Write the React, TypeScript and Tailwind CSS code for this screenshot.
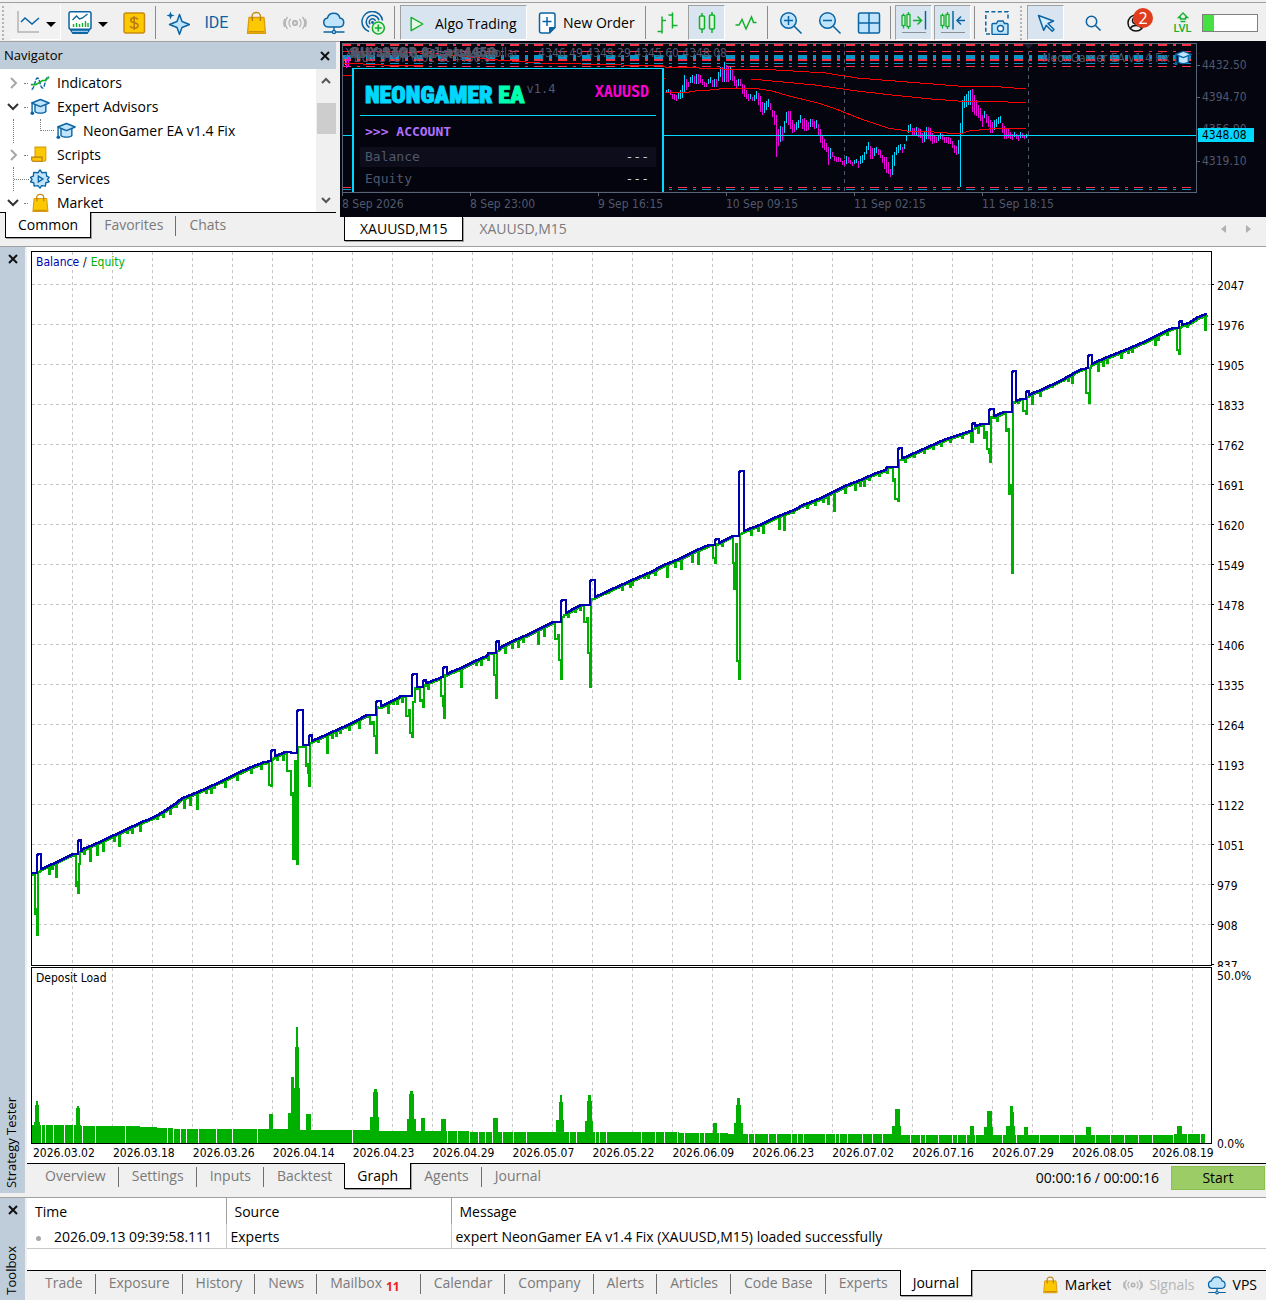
import React from "react";

const UI = "font-['Open_Sans','Noto_Sans',sans-serif]";
const CHART = "font-['DejaVu_Sans_Condensed','Noto_Sans',sans-serif]";
const MONO = "font-['DejaVu_Sans_Mono','Liberation_Mono',monospace]";

/* ---------- icons ---------- */

type IconProps = { children: React.ReactNode; className?: string };

function Icon({ children, className = "h-6 w-6" }: IconProps) {
  return (
    <svg viewBox="0 0 24 24" fill="none" className={`${className} shrink-0`} aria-hidden="true">
      {children}
    </svg>
  );
}

const BLUE = "#0a64a4";
const SKY = "#bfe4fb";
const GREEN = "#12b02c";

const LineChartIcon = () => (
  <Icon>
    <path d="M2 1v21h21" stroke="#b4b4b4" strokeWidth="1.5" />
    <path d="M5 12l4-4 7 6 7-6" stroke={BLUE} strokeWidth="1.5" />
  </Icon>
);
const MonitorIcon = () => (
  <Icon>
    <rect x="1" y="0.8" width="22" height="17.5" rx="2" fill="#fff" stroke={BLUE} strokeWidth="1.5" />
    <path d="M4.500 9l4-4 3 3 3-1 5-4" stroke={BLUE} strokeWidth="1.4" />
    <path d="M5.500 16v-3M8.500 16v-4M11.500 16v-3M14.500 16v-4M17.500 16v-6M20 16v-4" stroke={GREEN} strokeWidth="1.4" />
    <path d="M1.500 18.500h21l-3 4.500h-15z" fill={BLUE} />
    <path d="M4 20.300h16" stroke={SKY} strokeWidth="1" />
  </Icon>
);
const DollarIcon = () => (
  <Icon>
    <rect x="2" y="2" width="20.500" height="20" rx="2" fill="#fcc800" stroke="#c98c12" strokeWidth="1.500" />
    <path d="M15.800 8.500c-.8-1.300-2-1.700-3.600-1.700-2 0-3.500.9-3.500 2.500 0 3.600 7.300 1.500 7.300 5.100 0 1.700-1.700 2.700-3.800 2.700-1.900 0-3.400-.7-4.100-2M12.200 5v14" stroke="#b97a10" strokeWidth="1.500" />
  </Icon>
);
const SparkIcon = () => (
  <Icon>
    <path d="M13.500 3.500l2.500 7 7.500 3-7.500 3-2.500 6.700-2.500-6.700-7.500-3 7.500-3z" fill={SKY} stroke={BLUE} strokeWidth="1.500" strokeLinejoin="round" />
    <path d="M4.500.5l1.100 2.900 3 1.100-3 1.100-1.100 3-1.100-3-3-1.100 3-1.100z" fill={BLUE} />
  </Icon>
);
const BagIcon = ({ className }: { className?: string }) => (
  <Icon className={className}>
    <path d="M8 9V5.500a4 4 0 0 1 4-4h.5a4 4 0 0 1 4 4V9" stroke="#c98c12" strokeWidth="1.500" />
    <path d="M5 6.500h15l1.500 15.800H3.500z" fill="#fcc800" stroke="#d99c10" strokeWidth="1.300" strokeLinejoin="round" />
    <path d="M4.800 20.800h15.500" stroke="#b97a10" strokeWidth="1" />
    <path d="M8.300 6v4M16.400 6v4" stroke="#b97a10" strokeWidth="1.400" />
  </Icon>
);
const SignalIcon = ({ className }: { className?: string }) => (
  <Icon className={className}>
    <circle cx="12" cy="12" r="2.300" fill="#ddd" stroke="#adadad" strokeWidth="1.400" />
    <path d="M7.600 8a6 6 0 0 0 0 8M16.400 8a6 6 0 0 1 0 8M4.500 6a9 9 0 0 0 0 12M19.500 6a9 9 0 0 1 0 12M1.800 8a9 9 0 0 0 0 8M22.200 8a9 9 0 0 1 0 8" stroke="#b4b4b4" strokeWidth="1.400" />
  </Icon>
);
const CloudIcon = ({ className }: { className?: string }) => (
  <Icon className={className}>
    <path d="M6 16a4.500 4.500 0 0 1-.6-8.900A6.500 6.500 0 0 1 18 7.100a4.500 4.500 0 0 1-.3 8.900z" fill={SKY} stroke={BLUE} strokeWidth="1.500" />
    <path d="M12 16v4M1.500 21h8.500M14 21h8.500" stroke={BLUE} strokeWidth="1.400" />
    <circle cx="12" cy="21" r="1.600" stroke={BLUE} strokeWidth="1.300" fill={SKY} />
  </Icon>
);
const RadarIcon = () => (
  <Icon>
    <path d="M8 20.500A10.300 10.300 0 1 1 21.500 9.500M8.500 16.500A6.500 6.500 0 1 1 18 9.200M9.200 13.300A3.200 3.200 0 1 1 14.500 10" stroke={BLUE} strokeWidth="1.500" />
    <circle cx="11.500" cy="11.500" r="1.400" fill={BLUE} />
    <circle cx="17.300" cy="17" r="6" fill="#dff7df" stroke={GREEN} strokeWidth="1.500" />
    <path d="M17.300 13.500v7M13.800 17h7" stroke={GREEN} strokeWidth="1.600" />
  </Icon>
);
const PlayIcon = () => (
  <Icon className="h-5 w-5">
    <path d="M5 4l14 8-14 8z" fill="#e6f9e6" stroke={GREEN} strokeWidth="1.700" strokeLinejoin="round" />
  </Icon>
);
const NewOrderIcon = () => (
  <Icon>
    <path d="M6.500 2H18a2 2 0 0 1 2 2v12.500L14.500 22h-8a2 2 0 0 1-2-2V4a2 2 0 0 1 2-2z" fill="#fff" stroke={BLUE} strokeWidth="1.500" />
    <path d="M20 16.500L14.500 22v-5.500z" fill={BLUE} stroke={BLUE} />
    <path d="M12 6v9M7.500 10.500h9" stroke={BLUE} strokeWidth="1.500" />
  </Icon>
);
const BarsIcon = () => (
  <Icon>
    <path d="M6 5.500v17M1.500 20.500H6M6 9.500h4M16.500 1.500v16M12.500 4h4M16.500 14.500h5" stroke={GREEN} strokeWidth="1.500" />
  </Icon>
);
const CandlesIcon = () => (
  <Icon>
    <path d="M7 2v3M7 18v4M17 1v3M17 18v4" stroke={GREEN} strokeWidth="1.500" />
    <rect x="4.500" y="5" width="5" height="13" rx="1" fill="#dff5df" stroke={GREEN} strokeWidth="1.500" />
    <rect x="14.500" y="4" width="5" height="14" rx="1" fill="#dff5df" stroke={GREEN} strokeWidth="1.500" />
  </Icon>
);
const WaveIcon = () => (
  <Icon>
    <path d="M1.500 14H5l3-5.500L12 18l5.500-12 2 5.500h3" stroke={GREEN} strokeWidth="1.500" />
  </Icon>
);
const ZoomIcon = ({ plus }: { plus: boolean }) => (
  <Icon>
    <circle cx="9.500" cy="9.500" r="7.800" fill={SKY} stroke={BLUE} strokeWidth="1.500" />
    <path d={plus ? "M9.500 5v9M5 9.500h9" : "M5 9.500h9"} stroke={BLUE} strokeWidth="1.500" />
    <path d="M15 15l7.500 7.500" stroke={BLUE} strokeWidth="1.600" />
  </Icon>
);
const TilesIcon = () => (
  <Icon>
    <rect x="1.500" y="2" width="21" height="20" rx="1.500" fill={SKY} stroke={BLUE} strokeWidth="1.500" />
    <path d="M12 2v20M1.500 12h21" stroke={BLUE} strokeWidth="1.500" />
  </Icon>
);
const ShiftIcon = ({ mode }: { mode: "end" | "auto" }) => (
  <svg viewBox="0 0 28 24" fill="none" className="h-6 w-7" aria-hidden="true">
    <path d="M3.500 2.500v15M8.500 1v17" stroke={GREEN} strokeWidth="1.300" />
    <rect x="2" y="4.500" width="3" height="10" fill="#dff5df" stroke={GREEN} strokeWidth="1.300" />
    <rect x="7" y="3.500" width="3" height="12" fill="#dff5df" stroke={GREEN} strokeWidth="1.300" />
    {mode === "end" ? (
      <>
        <path d="M13 9.500h8M17.500 5.500l4 4-4 4" stroke={GREEN} strokeWidth="1.500" />
        <path d="M25.500 0v18.500" stroke={BLUE} strokeWidth="1.500" />
      </>
    ) : (
      <>
        <path d="M14 0v18.500" stroke={BLUE} strokeWidth="1.500" />
        <path d="M18 9.500h8M22 5.500l-4 4 4 4" stroke={BLUE} strokeWidth="1.500" />
      </>
    )}
    <path d="M2 21.500h24" stroke="#8a8f94" strokeWidth="1" />
  </svg>
);
const CameraIcon = () => (
  <Icon>
    <path d="M5 23H.8V.8H23V9" stroke={BLUE} strokeWidth="1.500" strokeDasharray="4 2.400" />
    <path d="M9 12.500h2.500l1.500-2.500h5l1.500 2.500H22a1 1 0 0 1 1 1v9a1 1 0 0 1-1 1H8a1 1 0 0 1-1-1v-9a1 1 0 0 1 1-1z" fill={SKY} stroke={BLUE} strokeWidth="1.400" />
    <circle cx="15.500" cy="17.500" r="3" fill="#fff" stroke={BLUE} strokeWidth="1.400" />
  </Icon>
);
const CursorIcon = () => (
  <Icon>
    <path d="M4.500 4.500l15 5.500-5.500 2.500 6 6-1.800 1.800-6-6-2.500 5z" fill="#d6efff" stroke={BLUE} strokeWidth="1.500" strokeLinejoin="round" />
  </Icon>
);
const SearchIcon = () => (
  <Icon>
    <circle cx="10.500" cy="10.500" r="5.200" stroke={BLUE} strokeWidth="1.500" />
    <path d="M14.500 14.500l5 5" stroke={BLUE} strokeWidth="1.600" />
  </Icon>
);
const UserIcon = () => (
  <Icon>
    <circle cx="10" cy="12" r="8" stroke="#111" strokeWidth="1.500" />
    <circle cx="10" cy="9.500" r="3.500" stroke="#111" strokeWidth="1.500" />
    <path d="M4.500 17.500c1.500-4 9.500-4 11 0" stroke="#111" strokeWidth="1.500" />
  </Icon>
);
const LevelIcon = () => (
  <svg viewBox="0 0 16 12" fill="none" className="h-3 w-4" aria-hidden="true">
    <path d="M8 1L3.500 5.500h2V7h5V5.500h2z" stroke={GREEN} strokeWidth="1.400" />
    <path d="M5.500 9.500h5" stroke={GREEN} strokeWidth="1.400" />
  </svg>
);
const CapIcon = ({ className = "h-5 w-5" }: { className?: string }) => (
  <Icon className={className}>
    <path d="M6 9.500v8c2 2.500 11 2.500 13 0v-8" fill={SKY} stroke={BLUE} strokeWidth="1.700" />
    <path d="M12.500 3L2 7.200l10.500 4.300L23 7.200z" fill={SKY} stroke={BLUE} strokeWidth="1.700" strokeLinejoin="round" />
    <path d="M2.500 8v11" stroke={BLUE} strokeWidth="1.700" />
    <circle cx="2.800" cy="19.500" r="2.200" fill={BLUE} />
  </Icon>
);
const IndicatorIcon = () => (
  <Icon className="h-5 w-5">
    <path d="M2 20c4-2 4-14 7-14s3 12 6 12 3-12 7-14" stroke={BLUE} strokeWidth="1.700" strokeDasharray="5 1.500" />
    <path d="M1 14h6l8-5h3l5-4" stroke={GREEN} strokeWidth="2" />
  </Icon>
);
const ScriptIcon = () => (
  <Icon className="h-5 w-5">
    <path d="M6 2.500h13v15a2 2 0 0 1-2 2H6z" fill="#fcc800" stroke="#d99c10" strokeWidth="1.300" />
    <path d="M2 14.500h12.500v5H4a2 2 0 0 1-2-2z" fill="#fcc800" stroke="#b97a10" strokeWidth="1.300" />
  </Icon>
);
const ServiceIcon = () => (
  <Icon className="h-5 w-5">
    <path d="M9.500 4.500L12 1l2.500 3.500 5-.5.500 4.500 3 1.500-2 2.500 2 3-4 1-.5 4-4.500-.5L12 23l-2.500-3-4.500.5-.500-4-4-1 2-3-2-2.500 3.500-1.500.5-4.500z" fill={SKY} stroke={BLUE} strokeWidth="1.600" strokeLinejoin="round" />
    <path d="M10 8.500l5.500 3.500-5.500 3.500z" fill={SKY} stroke={BLUE} strokeWidth="1.600" />
  </Icon>
);
const CloseIcon = () => (
  <svg viewBox="0 0 10 10" className="h-[10px] w-[10px]" fill="none" aria-hidden="true">
    <path d="M1 1l8 8M9 1L1 9" stroke="#111" strokeWidth="2" />
  </svg>
);
const Caret = () => (
  <svg viewBox="0 0 10 5" className="mt-1 h-[5px] w-[10px] shrink-0" aria-hidden="true">
    <path d="M0 0h10L5 5z" fill="#000" />
  </svg>
);

/* ---------- toolbar ---------- */

function ToolButton({ label, children, pressed = false }: { label: string; children: React.ReactNode; pressed?: boolean }) {
  return (
    <button
      aria-label={label}
      aria-pressed={pressed}
      className={
        pressed
          ? "mx-px flex h-[35px] w-[37px] shrink-0 items-center justify-center border border-[#a0a0a0] border-r-white border-b-white bg-[#d9e4f1]"
          : "flex h-[35px] w-[39px] shrink-0 items-center justify-center"
      }
    >
      {children}
    </button>
  );
}

const Separator = () => (
  <div className="flex h-[33px] w-[5px] shrink-0 justify-center">
    <div className="w-px bg-[#8c8c8c]" />
  </div>
);

const Grip = () => <div className="h-[34px] w-[3px] shrink-0 border-l-2 border-dotted border-[#b4b4b4]" />;

function Toolbar() {
  return (
    <header className="flex h-[42px] items-center overflow-hidden border-b border-[#a0a0a0] bg-[#f0f0f0] pt-1 shadow-[inset_0_2px_0_0_#f0f0f0,inset_0_3px_0_0_#a0a0a0]">
      <div className="flex w-[11px] shrink-0 pl-[2px]"><Grip /></div>
      <button aria-label="Chart type" className="flex h-[35px] w-[50px] shrink-0 items-center gap-[6px] border-r border-b border-white bg-[#f2f2f2] pl-[5px]">
        <LineChartIcon /><Caret />
      </button>
      <button aria-label="Templates" className="flex h-[35px] w-[53px] shrink-0 items-center gap-[6px] pl-[7px]">
        <MonitorIcon /><Caret />
      </button>
      <ToolButton label="Quotes"><DollarIcon /></ToolButton>
      <Separator />
      <ToolButton label="Assistant"><SparkIcon /></ToolButton>
      <ToolButton label="IDE"><span className="font-['Roboto',sans-serif] text-base text-[#0a64a4]">IDE</span></ToolButton>
      <ToolButton label="Market"><BagIcon /></ToolButton>
      <ToolButton label="Signals"><SignalIcon /></ToolButton>
      <ToolButton label="VPS"><CloudIcon /></ToolButton>
      <ToolButton label="Copy"><RadarIcon /></ToolButton>
      <Separator />
      <button aria-pressed="true" className="ml-[3px] flex h-[35px] w-[127px] shrink-0 items-center gap-2 border border-[#a0a0a0] border-r-white border-b-white bg-[#d9e4f1] pt-[2px] pl-[6px] text-sm whitespace-nowrap">
        <PlayIcon />Algo Trading
      </button>
      <button className="flex h-[35px] w-[116px] shrink-0 items-center gap-1 pl-2 text-sm whitespace-nowrap">
        <NewOrderIcon />New Order
      </button>
      <Separator />
      <ToolButton label="Bars"><BarsIcon /></ToolButton>
      <ToolButton label="Candles" pressed><CandlesIcon /></ToolButton>
      <ToolButton label="Line"><WaveIcon /></ToolButton>
      <Separator />
      <div className="flex shrink-0 pl-px">
        <ToolButton label="Zoom in"><ZoomIcon plus /></ToolButton>
        <ToolButton label="Zoom out"><ZoomIcon plus={false} /></ToolButton>
        <ToolButton label="Tile windows"><TilesIcon /></ToolButton>
      </div>
      <Separator />
      <div className="flex shrink-0 pl-px">
        <ToolButton label="Auto scroll" pressed><ShiftIcon mode="end" /></ToolButton>
        <ToolButton label="Chart shift" pressed><ShiftIcon mode="auto" /></ToolButton>
      </div>
      <Separator />
      <ToolButton label="Screenshot"><CameraIcon /></ToolButton>
      <div className="flex w-[10px] shrink-0 justify-center"><Grip /></div>
      <ToolButton label="Cursor" pressed><CursorIcon /></ToolButton>
      <div className="ml-auto flex shrink-0 items-center pr-2">
        <ToolButton label="Search"><SearchIcon /></ToolButton>
        <button aria-label="Account, 2 notifications" className="relative ml-[6px] flex h-[35px] w-[39px] shrink-0 items-center justify-center">
          <UserIcon />
          <span className="absolute top-[3px] right-1 flex h-5 w-5 items-center justify-center rounded-full bg-[#e03c1e] text-base text-white">2</span>
        </button>
        <button aria-label="Level" className="ml-[6px] flex h-[35px] w-[39px] shrink-0 flex-col items-center justify-center">
          <LevelIcon />
          <span className="font-['Roboto',sans-serif] text-[11px] leading-[10px] font-medium text-[#12b02c]">LVL</span>
        </button>
        <div className="flex h-[18px] w-14 border border-[#808080] bg-white">
          <div className="w-[11px] bg-[#44e044]" />
        </div>
      </div>
    </header>
  );
}

/* ---------- navigator ---------- */

function Chevron({ open }: { open: boolean }) {
  return (
    <svg viewBox="0 0 12 12" className="h-3 w-3" fill="none" aria-hidden="true">
      {open ? <path d="M1 3l5 5 5-5" stroke="#333" strokeWidth="2" /> : <path d="M4 1l5 5-5 5" stroke="#a6a6a6" strokeWidth="2" />}
    </svg>
  );
}

const TREE: { label: string; icon: React.ReactNode; state: "open" | "closed" | "leaf"; child?: boolean }[] = [
  { label: "Indicators", icon: <IndicatorIcon />, state: "closed" },
  { label: "Expert Advisors", icon: <CapIcon />, state: "open" },
  { label: "NeonGamer EA v1.4 Fix", icon: <CapIcon />, state: "leaf", child: true },
  { label: "Scripts", icon: <ScriptIcon />, state: "closed" },
  { label: "Services", icon: <ServiceIcon />, state: "leaf" },
  { label: "Market", icon: <BagIcon className="h-5 w-5" />, state: "open" },
];

function Navigator() {
  return (
    <aside className="flex w-[336px] shrink-0 flex-col">
      <div className="flex h-[27px] items-center justify-between bg-[#bfcddb] pr-[6px] pl-1">
        <h2 className="text-[13px]">Navigator</h2>
        <button aria-label="Close navigator"><CloseIcon /></button>
      </div>
      <div className="flex h-[143px] overflow-hidden bg-white">
        <ul className="flex-1 pt-[2px] text-sm">
          {TREE.map((n) => (
            <li key={n.label} className="flex h-6 items-center">
              <div className="flex h-6 w-7 shrink-0 items-center pl-[7px]">
                {n.state === "leaf" ? (
                  <div className="ml-[6px] flex h-6 w-4 items-center border-l border-dotted border-[#808080]">
                    {!n.child && <div className="w-4 border-t border-dotted border-[#808080]" />}
                  </div>
                ) : (
                  <>
                    <Chevron open={n.state === "open"} />
                    <div className="ml-[5px] w-1 border-t border-dotted border-[#808080]" />
                  </>
                )}
              </div>
              {n.child && <div className="ml-3 h-3 w-[14px] self-start border-b border-l border-dotted border-[#808080]" />}
              <div className="ml-[2px] flex w-[27px] shrink-0">{n.icon}</div>
              <span className="whitespace-nowrap">{n.label}</span>
            </li>
          ))}
        </ul>
        <div className="flex w-5 flex-col items-center justify-between bg-[#f0f0f0] py-2">
          <svg viewBox="0 0 10 7" className="h-[7px] w-[10px]" fill="none" aria-hidden="true"><path d="M1 6l4-4 4 4" stroke="#555" strokeWidth="2" /></svg>
          <div className="mb-11 h-[31px] w-[19px] bg-[#cdcdcd]" />
          <svg viewBox="0 0 10 7" className="h-[7px] w-[10px]" fill="none" aria-hidden="true"><path d="M1 1l4 4 4-4" stroke="#555" strokeWidth="2" /></svg>
        </div>
      </div>
      <TabBar tabs={["Common", "Favorites", "Chats"]} active="Common" />
    </aside>
  );
}

function TabBar({ tabs, active, badge }: { tabs: string[]; active: string; badge?: Record<string, string> }) {
  return (
    <div role="tablist" className="flex h-[26px] border-t border-black pl-[5px] text-sm">
      {tabs.map((t, i) => {
        const on = t === active;
        const divided = !on && i < tabs.length - 1 && tabs[i + 1] !== active;
        return (
          <button
            key={t}
            role="tab"
            aria-selected={on}
            className={
              on
                ? "-mt-px h-[26px] shrink-0 border-r border-b border-l border-black bg-white px-3 leading-[25px] whitespace-nowrap shadow-[1px_1px_0_#a0a0a0]"
                : "flex h-6 shrink-0 items-center whitespace-nowrap text-[#7a7a7a]"
            }
          >
            {on ? t : (
              <>
                <span className="pr-3 pl-[13px]">{t}{badge?.[t] && <sub className="mr-2 ml-1 text-xs font-bold text-[#f02020]">{badge[t]}</sub>}</span>
                {divided && <span className="mt-[2px] h-5 w-px bg-[#707070]" />}
              </>
            )}
          </button>
        );
      })}
    </div>
  );
}

/* ---------- price chart ---------- */

const CANDLE_ANCHORS: [number, number, number][] = [
  [666, 90, 93], [670, 90, 95], [676, 95, 101], [680, 90, 99], [684, 75, 93], [688, 82, 87], [692, 75, 83], [698, 74, 84], [702, 79, 85],
  [706, 83, 87], [710, 77, 83], [714, 79, 87], [716, 79, 87], [720, 67, 77], [724, 62, 82], [728, 67, 82], [732, 70, 81], [736, 80, 88], [740, 79, 86],
  [744, 85, 97], [748, 94, 101], [752, 97, 101], [756, 91, 99], [760, 96, 112], [764, 103, 113], [768, 99, 107], [772, 110, 117],
  [774, 111, 125], [776, 115, 157], [778, 129, 146], [782, 127, 141], [786, 112, 123], [790, 111, 129], [794, 124, 132], [798, 120, 128],
  [800, 115, 123], [804, 118, 131], [808, 122, 130], [812, 119, 127], [816, 120, 128], [820, 129, 143], [826, 143, 152], [828, 147, 165],
  [832, 152, 157], [836, 157, 162], [842, 161, 165], [846, 156, 164], [850, 160, 164], [856, 159, 163], [858, 161, 168], [862, 155, 163],
  [868, 142, 150], [870, 146, 159], [876, 147, 153], [882, 155, 163], [886, 157, 173], [890, 169, 177], [892, 155, 175], [896, 147, 155],
  [904, 144, 149], [908, 125, 133], [916, 127, 135], [922, 133, 143], [926, 127, 139], [930, 128, 141], [936, 137, 143], [942, 134, 140],
  [946, 137, 143], [952, 141, 148], [956, 146, 155], [958, 140, 154], [960, 123, 187], [962, 100, 133], [964, 96, 108], [970, 90, 105],
  [972, 89, 112], [978, 105, 118], [982, 115, 127], [984, 111, 118], [990, 120, 133], [996, 119, 127], [1000, 116, 123], [1004, 126, 139],
  [1010, 132, 139], [1014, 132, 137], [1018, 135, 141], [1022, 133, 138], [1026, 134, 138],
];

function buildCandles() {
  const out: { x: number; hi: number; lo: number; up: boolean }[] = [];
  let k = 0;
  let prev = 92;
  for (let x = 666; x <= 1026; x += 2) {
    while (k < CANDLE_ANCHORS.length - 2 && CANDLE_ANCHORS[k + 1][0] <= x) k++;
    const [x0, h0, l0] = CANDLE_ANCHORS[k];
    const [x1, h1, l1] = CANDLE_ANCHORS[k + 1];
    const t = (x - x0) / (x1 - x0);
    const exact = t === 0 || t === 1;
    const j = exact ? 0 : ((x * 7) % 5) - 2;
    const hi = Math.round(h0 + (h1 - h0) * t + j);
    const lo = Math.round(l0 + (l1 - l0) * t + j);
    const mid = (hi + lo) / 2;
    out.push({ x, hi, lo, up: x === 960 || mid < prev });
    prev = mid;
  }
  return out;
}

const CANDLES = buildCandles();
const LEVELS: [number, number, string][] = [
  [45, 2, "#ff3048"], [51, 1, "#ff3048"], [57, 4, "#0a96c8"], [60, 2, "#ff3048"], [63, 1, "#0a96c8"], [66, 1, "#ff3048"],
  [187, 1, "#ff3048"], [189, 1, "#0a96c8"],
];
const AVERAGES = [
  "343,51 400,52 440,54 498,60 540,63 663,66 665,67 699,68 724,69 751,69 776,70 826,73 857,78 907,82 958,86 989,86 1026,89",
  "343,75 352,75 665,79 751,79 772,81 815,85 857,91 892,95 931,99 958,101 990,101 1026,103",
  "665,92 689,92 695,91 710,90 728,88 753,88 772,91 789,96 818,103 836,109 861,119 888,128 907,131 934,132 960,134 969,131 989,129 1010,128 1026,129",
  "343,63 383,65 423,66",
];

function PriceChart() {
  return (
    <div className={`flex h-[176px] bg-[#05050f] text-xs text-[#4f586c] ${CHART}`}>
      <div className="flex min-w-0 flex-1 flex-col pl-[2px]">
        <div className="relative mt-[2px] h-[150px] overflow-hidden">
          <svg viewBox="342 43 855 150" preserveAspectRatio="none" className="absolute inset-0 h-full w-full" shapeRendering="crispEdges" aria-hidden="true">
            {LEVELS.map(([y, w, c]) => (
              <line key={y} x1="342" x2="1192" y1={y + (w % 2) / 2} y2={y + (w % 2) / 2} stroke={c} strokeWidth={w} strokeDasharray="9 6 3 6" />
            ))}
            <path d="M844.5 43v149M1028.500 43v149" stroke="#4f586c" strokeDasharray="4 4" />
            {CANDLES.map((c) => (
              <rect key={c.x} x={c.x} y={c.hi} width="1" height={c.lo - c.hi} fill={c.up ? "#00d8ff" : "#f000e0"} />
            ))}
            <path d="M343.500 58v9M346.500 60v8M348.500 57v10" stroke="#f000e0" />
            <path d="M345.500 59v6" stroke="#00d8ff" />
            {AVERAGES.map((p) => (
              <polyline key={p} points={p} fill="none" stroke="#ff0000" />
            ))}
            <path d="M342 135.500h855" stroke="#00d8ff" />
            <path d="M1022 43h12l-6 6z" fill="#1c1c2c" />
            <path d="M342.500 192V43.500h854V192.500H342" fill="none" stroke="#5a6478" />
          </svg>
          <div className="absolute top-[1px] left-[9px] text-[13px] leading-4 font-bold whitespace-nowrap text-[#6b7186]/80">BUY STOP 0.1 at 4450</div>
          <div className="absolute top-[3px] left-2 text-xs leading-4 font-bold whitespace-nowrap text-[#4f586c]">buy 4500 0.01 at 4490.0</div>
          <div className="absolute top-[7px] left-3 text-xs leading-4 whitespace-nowrap">BUY STOP 0.01 at 4430.0</div>
          <div className="absolute top-[2px] left-[3px] flex gap-5 text-xs leading-4 whitespace-pre">
            <span>XAUUSD,M15: Gold vs US Dollar</span>
            <span>4346.49 4349.29 4345.60 4348.08</span>
          </div>
          <div className="absolute top-[6px] right-[5px] flex items-center gap-1 text-xs leading-4 whitespace-nowrap">
            NeonGamer EA v1.4 Fix
            <CapIcon className="h-[18px] w-[18px]" />
          </div>
          <ExpertPanel />
        </div>
        <div className="flex">
          {["8 Sep 2026", "8 Sep 23:00", "9 Sep 16:15", "10 Sep 09:15", "11 Sep 02:15", "11 Sep 18:15"].map((t) => (
            <div key={t} className="w-[14.97%] shrink-0 whitespace-nowrap">
              <div className="h-[3px] border-l border-[#5a6478]" />
              <div className="leading-4">{t}</div>
            </div>
          ))}
        </div>
      </div>
      <div className="relative w-[69px] shrink-0 pt-2">
        {["4432.50", "4394.70", "4356.90", "4319.10"].map((p) => (
          <div key={p} className="flex h-8 items-center">
            <span className="mr-[2px] h-px w-[3px] bg-[#5a6478]" />{p}
          </div>
        ))}
        <div className="absolute top-[87px] left-px flex h-[14px] w-14 items-center bg-[#00d8ff] pl-1 text-black">4348.08</div>
      </div>
    </div>
  );
}

function ExpertPanel() {
  return (
    <section className={`absolute top-[25px] left-[10px] h-[124px] w-[312px] overflow-hidden border-x-2 border-t border-[#00d8ff] bg-[#04040e] px-[6px] ${MONO}`}>
      <div className="flex h-[47px] items-start justify-between border-b border-[#00d8ff] px-[5px] pt-2">
        <div className="flex items-start">
          <h1 className="font-['Liberation_Sans_Narrow','Roboto_Condensed','Roboto',sans-serif] text-2xl leading-9 font-black text-[#00d8ff] [-webkit-text-stroke:1px_currentColor]">
            NEONGAMER <span className="text-[#00ffb0]">EA</span>
          </h1>
          <span className="pt-1 pl-[2px] text-xs leading-4">v1.4</span>
        </div>
        <span className="pt-[5px] pr-[2px] text-[15px] leading-5 font-bold text-[#ff00d4]">XAUUSD</span>
      </div>
      <div className="px-[5px] text-[13px] leading-[31px] font-bold text-[#b070ff]">{">>> ACCOUNT"}</div>
      <div className="mb-[2px] flex h-5 items-center justify-between bg-[#0d0d1b] pr-[7px] pl-[5px] text-[13px]">
        <span>Balance</span>
        <span className="text-[#c8ccd8]">---</span>
      </div>
      <div className="mb-[2px] flex h-5 items-center justify-between pr-[7px] pl-[5px] text-[13px]">
        <span>Equity</span>
        <span className="text-[#c8ccd8]">---</span>
      </div>
      <div className="h-5 bg-[#0d0d1b]" />
    </section>
  );
}

/* ---------- tester graph ---------- */

type Pt = [number, number];
type Frame = (p: Pt) => Pt;

const partA: Frame = ([x, y]) => [x / 3, 590 + y / 3];
const partB: Frame = ([x, y]) => [400 + x / 3, 400 + y / 3];
const partC: Frame = ([x, y]) => [800 + x / 3, 280 + y / 3];

const BASE: Pt[] = [
  ...([[96, 850], [110, 848], [122, 837], [170, 815], [200, 800], [218, 792], [234, 792], [246, 778], [300, 755], [340, 736], [380, 717], [420, 698], [458, 683], [490, 664], [520, 645], [545, 625], [580, 611], [620, 594], [660, 575], [700, 555], [745, 534], [790, 517], [812, 512], [825, 498], [850, 487], [889, 488], [893, 466], [925, 465], [937, 452], [980, 433], [1020, 415], [1060, 397], [1097, 376], [1127, 375], [1132, 350], [1144, 348], [1180, 330], [1199, 320]] as Pt[]).map(partA),
  ...([[0, 888], [36, 887], [44, 863], [69, 860], [77, 850], [100, 840], [129, 830], [143, 820], [185, 803], [220, 785], [260, 768], [265, 758], [288, 758], [300, 743], [340, 722], [380, 705], [420, 686], [458, 666], [482, 666], [486, 645], [499, 638], [540, 615], [570, 614], [574, 595], [586, 590], [640, 565], [700, 538], [760, 512], [785, 497], [840, 475], [890, 450], [925, 435], [944, 434], [958, 427], [995, 409], [1017, 408], [1021, 398], [1033, 392], [1080, 374], [1130, 350], [1180, 330], [1199, 320]] as Pt[]).map(partB),
  ...([[0, 678], [60, 655], [100, 635], [140, 615], [180, 600], [220, 582], [255, 570], [260, 560], [292, 560], [298, 537], [306, 535], [340, 520], [380, 502], [430, 480], [480, 463], [515, 451], [527, 438], [545, 432], [567, 432], [573, 411], [583, 408], [610, 396], [636, 396], [639, 364], [648, 362], [660, 357], [678, 356], [687, 343], [720, 330], [780, 302], [840, 268], [863, 264], [878, 250], [920, 232], [980, 208], [1040, 182], [1090, 156], [1120, 143], [1136, 143], [1148, 134], [1170, 127], [1190, 113], [1215, 103], [1222, 102]] as Pt[]).map(partC),
];

function baseAt(x: number) {
  for (let i = 1; i < BASE.length; i++) {
    if (BASE[i][0] >= x) {
      const [x0, y0] = BASE[i - 1];
      const [x1, y1] = BASE[i];
      return x1 === x0 ? y1 : y0 + ((y1 - y0) * (x - x0)) / (x1 - x0);
    }
  }
  return BASE[BASE.length - 1][1];
}

const CAPS: [Frame, number[][]][] = [
  [partA, [[110, 122, 793], [234, 243, 750], [812, 824, 480], [891, 908, 360], [927, 936, 435], [1128, 1143, 332]]],
  [partB, [[37, 51, 821], [69, 77, 841], [130, 142, 801], [289, 298, 723], [483, 498, 600], [571, 585, 540], [945, 956, 418], [1017, 1032, 213]]],
  [partC, [[293, 306, 505], [516, 526, 430], [568, 582, 387], [636, 647, 273], [679, 686, 333], [865, 877, 226], [1137, 1147, 124]]],
];

const DIPS: [Frame, Pt[][]][] = [
  [partA, [
    [[105, 972], [109, 957], [111, 1035], [114, 1035], [115, 845]], [[148, 852]], [[155, 838]], [[169, 862]],
    [[228, 888], [232, 875], [234, 910], [237, 910], [238, 822], [240, 785]],
    [[252, 792]], [[271, 814]], [[292, 795]], [[310, 782]], [[343, 752]], [[358, 767]], [[380, 730]], [[397, 729]], [[421, 723]], [[472, 686]], [[490, 682]], [[511, 672]], [[528, 650]], [[552, 653]], [[571, 645]], [[592, 658]], [[618, 608]], [[632, 608]], [[643, 595]], [[676, 592]], [[710, 570]], [[752, 550]], [[782, 538]],
    [[807, 586], [813, 588], [816, 588], [817, 510]], [[832, 510]], [[848, 510]],
    [[862, 542], [871, 542], [873, 615], [878, 605], [880, 808], [882, 808], [885, 512], [889, 770], [891, 822], [893, 822], [894, 470], [915, 468], [918, 528], [923, 520], [925, 550], [928, 588], [930, 588], [931, 460]],
    [[955, 455]], [[982, 490]], [[997, 445]], [[1007, 438]], [[1020, 430]], [[1048, 420]], [[1078, 415]],
    [[1111, 402], [1117, 395], [1122, 438], [1127, 488], [1131, 488], [1132, 352]], [[1165, 370]], [[1178, 343]], [[1192, 343]],
  ]],
  [partB, [
    [[6, 906]], [[18, 948], [27, 930], [30, 1000], [36, 1012], [39, 1012], [40, 905], [45, 865]],
    [[60, 903], [67, 900], [69, 921], [71, 921], [72, 855]], [[84, 868]],
    [[124, 888], [128, 918], [132, 955], [135, 955], [136, 824]], [[184, 860]], [[228, 795]], [[244, 795]], [[265, 780]],
    [[283, 825], [288, 895], [291, 895], [292, 752]], [[316, 760]], [[337, 745]], [[355, 742]], [[370, 726]], [[415, 731]], [[433, 707]],
    [[465, 716], [474, 705], [477, 780], [483, 837], [486, 837], [487, 650], [492, 644]], [[504, 650]], [[525, 635]], [[540, 630]],
    [[552, 665], [561, 655], [564, 760], [570, 862], [573, 862], [574, 600]],
    [[625, 580]], [[667, 570]], [[690, 562]], [[697, 555]], [[733, 535]], [[745, 535]], [[765, 525]], [[802, 532]], [[826, 502]], [[844, 506]], [[877, 485]], [[893, 493]],
    [[939, 475], [945, 490], [948, 490], [949, 432]], [[967, 438]],
    [[1000, 490], [1003, 568], [1008, 432], [1011, 783], [1017, 838], [1020, 838], [1021, 403]],
    [[1054, 405]], [[1075, 392]], [[1090, 400]], [[1138, 388]], [[1153, 390]], [[1180, 340]],
  ]],
  [partC, [
    [[20, 683]], [[45, 676]], [[68, 665]], [[85, 673]], [[103, 692]], [[136, 640]], [[165, 630]], [[181, 617]], [[193, 619]], [[208, 600]], [[238, 588]], [[262, 580]],
    [[278, 604], [284, 594], [286, 658], [294, 664], [297, 664], [298, 540]], [[315, 547]], [[343, 530]], [[373, 520]], [[400, 508]], [[424, 497]], [[451, 485]], [[487, 475]],
    [[512, 487], [518, 486], [520, 448]], [[535, 460]],
    [[553, 473], [559, 457], [562, 507], [568, 520], [570, 547], [573, 547], [574, 412]], [[590, 424]],
    [[619, 452], [625, 447], [628, 642], [634, 615], [636, 880], [638, 880], [639, 366]], [[655, 370]],
    [[670, 393], [678, 402], [680, 402], [682, 350]], [[697, 373]], [[721, 347]], [[757, 322]], [[790, 303]], [[805, 303]], [[817, 310]],
    [[859, 338], [866, 343], [868, 370], [870, 370], [871, 264]], [[895, 273]], [[910, 258]], [[922, 248]], [[964, 235]], [[983, 218]], [[997, 217]], [[1066, 196]], [[1075, 180]], [[1102, 166]],
    [[1132, 210], [1137, 222], [1139, 222], [1141, 145]], [[1160, 140]], [[1214, 151]],
  ]],
];

/* Walks the trend line and detours through each excursion, then draws it as whole-pixel steps. */
function trace(excursions: Pt[][], offset: number) {
  const out: Pt[] = [];
  let x = BASE[0][0];
  for (const e of excursions) {
    for (; x < e[0][0] - 1; x += 1) out.push([x, baseAt(x) + offset]);
    out.push([e[0][0], baseAt(e[0][0] - 1) + offset]);
    out.push(...e);
    x = e[e.length - 1][0] + 1;
    out.push([x, baseAt(x) + offset]);
  }
  for (; x <= 1208; x += 1) out.push([x, baseAt(x) + offset]);
  const steps = out.map(([px, py]) => `H${Math.round(px)}V${Math.round(py)}`).join("");
  return `M${Math.round(out[0][0])} ${Math.round(out[0][1])}${steps}`;
}

const BALANCE = trace(
  CAPS.flatMap(([f, caps]) => caps.map(([a, b, y]) => [f([a, y + 3]), f([a + 3, y]), f([b - 3, y])] as Pt[])),
  0,
);
const EQUITY = trace(DIPS.flatMap(([f, dips]) => dips.map((d) => d.map(f))), 1.5);

const LOAD_LEVEL: Pt[] = [[32, 1125], [130, 1126], [150, 1127], [163, 1128], [184, 1129], [245, 1129], [340, 1130], [408, 1131], [530, 1132], [654, 1132], [753, 1134], [891, 1134], [911, 1135], [1172, 1135], [1173, 1134], [1205, 1134]];
const SPIKES_L = [[83, 97, 487], [86, 95, 435], [87, 93, 423], [186, 196, 445], [188, 194, 438], [658, 668, 463], [706, 736, 460], [712, 735, 384], [714, 720, 351], [723, 733, 262], [724, 730, 201], [750, 761, 463], [906, 929, 471], [915, 926, 396], [917, 924, 387], [997, 1018, 476], [1003, 1014, 402], [1004, 1012, 393], [1031, 1041, 474], [1080, 1092, 476], [1209, 1219, 474], [1362, 1383, 480], [1369, 1380, 425], [1371, 1378, 405], [1433, 1454, 484], [1439, 1450, 422], [1441, 1448, 405]];
const SPIKES_R = [[213, 223, 489], [264, 287, 490], [270, 282, 435], [272, 279, 415], [652, 674, 498], [659, 671, 447], [843, 853, 498], [877, 899, 501], [884, 897, 453], [931, 953, 498], [940, 951, 457], [942, 948, 438], [975, 985, 501], [1127, 1139, 500], [1350, 1361, 499]];
const GAPS = [
  ...[101, 110, 131, 156, 180, 200, 232, 306, 408, 424, 441, 455, 486, 530, 569, 630, 862, 1094, 1120, 1150, 1172, 1189, 1205, 1230, 1258, 1288, 1394, 1411, 1458, 1468, 1484].map((x) => Math.round(x / 2.45)),
  ...[36, 72, 92, 126, 143, 178, 192, 227, 300, 313, 347, 368, 405, 418, 433, 488, 513, 523, 542, 577, 602, 627, 697, 720, 733, 765, 799, 811, 834, 856, 921, 956, 1013, 1061, 1097, 1148, 1185, 1220, 1255, 1288, 1341, 1375, 1406].map((x) => Math.round(626 + x / 2.45)),
];
const SPIKES = [
  ...SPIKES_L.map(([a, b, y]) => [a / 2.45, b / 2.45, 960 + y / 3]),
  ...SPIKES_R.map(([a, b, y]) => [626 + a / 2.45, 626 + b / 2.45, 960 + y / 3]),
].map((s) => s.map(Math.round));

const GRID_X = Array.from({ length: 29 }, (_, i) => 72.5 + i * 40);
const GRID_Y = Array.from({ length: 17 }, (_, i) => 284.5 + i * 40);
const LOAD_POINTS = [`32,1143`, ...LOAD_LEVEL.map((p) => p.join(",")), `1205,1143`].join(" ");

function TesterGraph() {
  return (
    <div className={`flex h-[916px] bg-white pt-1 pl-1 text-xs text-black ${CHART}`}>
      <div className="flex min-w-0 flex-1 flex-col">
        <div className="relative h-[715px]">
          <svg viewBox="31 251 1181 715" preserveAspectRatio="none" className="absolute inset-0 h-full w-full" shapeRendering="crispEdges" role="img" aria-label="Balance and equity">
            <g stroke="#c4c4c4" strokeDasharray="3 3">
              {GRID_X.map((x) => <line key={x} x1={x} x2={x} y1="252" y2="965" />)}
              {GRID_Y.map((y) => <line key={y} x1="32" x2="1211" y1={y} y2={y} />)}
            </g>
            <path d={EQUITY} fill="none" stroke="#00b000" strokeWidth="2" />
            <path d={BALANCE} fill="none" stroke="#0000b0" strokeWidth="2" />
            <rect x="31.500" y="251.500" width="1180" height="714" fill="none" stroke="#000" />
          </svg>
          <div className="relative flex gap-1 pt-[3px] pl-[5px] leading-4">
            <span className="text-[#0000b0]">Balance</span>/<span className="text-[#00b000]">Equity</span>
          </div>
        </div>
        <div className="relative mt-px h-[177px]">
          <svg viewBox="31 967 1181 177" preserveAspectRatio="none" className="absolute inset-0 h-full w-full" shapeRendering="crispEdges" role="img" aria-label="Deposit load">
            <g stroke="#c4c4c4" strokeDasharray="3 3">
              {GRID_X.map((x) => <line key={x} x1={x} x2={x} y1="968" y2="1143" />)}
            </g>
            <polygon points={LOAD_POINTS} fill="#00b000" />
            {GAPS.map((x) => <rect key={x} x={x} y="1120" width="1" height="23" fill="#fff" />)}
            {SPIKES.map(([a, b, y]) => <rect key={`${a}-${y}`} x={a} y={y} width={b - a} height={1143 - y} fill="#00b000" />)}
            <rect x="31.500" y="967.500" width="1180" height="176" fill="none" stroke="#000" />
          </svg>
          <div className="relative pt-[3px] pl-[5px] leading-4">Deposit Load</div>
        </div>
        <div className="flex pl-[2px] leading-[18px]">
          {["2026.03.02", "2026.03.18", "2026.03.26", "2026.04.14", "2026.04.23", "2026.04.29", "2026.05.07", "2026.05.22", "2026.06.09", "2026.06.23", "2026.07.02", "2026.07.16", "2026.07.29", "2026.08.05", "2026.08.19"].map((d) => (
            <span key={d} className="w-[6.78%] shrink-0 whitespace-nowrap">{d}</span>
          ))}
        </div>
      </div>
      <div className="flex w-[54px] shrink-0 flex-col">
        <div className="h-[716px] overflow-hidden pt-[14px]">
          {["2047", "1976", "1905", "1833", "1762", "1691", "1620", "1549", "1478", "1406", "1335", "1264", "1193", "1122", "1051", "979", "908", "837"].map((v) => (
            <div key={v} className="flex h-10 gap-[3px] leading-[42px]">
              <span className="mt-[19px] h-px w-[2px] bg-black" />
              <span>{v}</span>
            </div>
          ))}
        </div>
        <div className="flex h-[185px] flex-col justify-between pt-px pl-[5px] leading-4">
          <span>50.0%</span>
          <span>0.0%</span>
        </div>
      </div>
    </div>
  );
}

/* ---------- docked panels ---------- */

function DockRail({ title }: { title: string }) {
  return (
    <div className="mr-[2px] flex w-[25px] shrink-0 flex-col items-center justify-between bg-[#bfcddb] pt-[7px] pb-[5px]">
      <button aria-label={`Close ${title}`}><CloseIcon /></button>
      <span className="mr-1 rotate-180 text-[13px] leading-5 whitespace-nowrap [writing-mode:vertical-rl]">{title}</span>
    </div>
  );
}

function StrategyTester() {
  return (
    <section className="flex border-t border-[#a0a0a0] pb-1">
      <DockRail title="Strategy Tester" />
      <div className="flex min-w-0 flex-1 flex-col">
        <TesterGraph />
        <div className="relative h-[30px]">
          <TabBar tabs={["Overview", "Settings", "Inputs", "Backtest", "Graph", "Agents", "Journal"]} active="Graph" />
          <div className="absolute top-[3px] right-px flex items-center gap-3 text-sm">
            <span>00:00:16 / 00:00:16</span>
            <button className="h-6 w-[94px] border border-[#8bc050] bg-[#9ccc65]">Start</button>
          </div>
        </div>
      </div>
    </section>
  );
}

function Toolbox() {
  return (
    <section className="flex flex-1 border-t border-[#a0a0a0]">
      <DockRail title="Toolbox" />
      <div className="flex min-w-0 flex-1 flex-col">
        <div className="flex-1 bg-white">
          <table className="w-full table-fixed border-collapse text-left text-sm">
            <colgroup>
              <col className="w-[199px]" /><col className="w-[225px]" /><col />
            </colgroup>
            <thead>
              <tr className="h-[26px]">
                <th className="border-r border-[#a0a0a0] pt-[2px] pl-2 font-normal">Time</th>
                <th className="border-r border-[#a0a0a0] pt-[2px] pl-2 font-normal">Source</th>
                <th className="pt-[2px] pl-2 font-normal">Message</th>
              </tr>
            </thead>
            <tbody>
              <tr className="h-[24px] border-b border-[#c8c8c8]">
                <td className="border-r border-[#c8c8c8] pt-[2px] pl-[9px] whitespace-nowrap">
                  <span className="mr-[13px] inline-block h-[5px] w-[5px] rounded-full bg-[#a8a8a8] align-middle" />2026.09.13 09:39:58.111
                </td>
                <td className="border-r border-[#c8c8c8] pt-[2px] pl-1">Experts</td>
                <td className="pt-[2px] pl-1">expert NeonGamer EA v1.4 Fix (XAUUSD,M15) loaded successfully</td>
              </tr>
            </tbody>
          </table>
        </div>
        <div className="relative h-[30px]">
          <TabBar
            tabs={["Trade", "Exposure", "History", "News", "Mailbox", "Calendar", "Company", "Alerts", "Articles", "Code Base", "Experts", "Journal"]}
            active="Journal"
            badge={{ Mailbox: "11" }}
          />
          <div className="absolute top-[5px] right-[9px] flex h-5 items-center gap-3 text-sm">
            <a href="#market" className="flex items-center gap-[6px]"><BagIcon className="h-[18px] w-[18px]" />Market</a>
            <a href="#signals" className="flex items-center gap-[6px] text-[#b4b4b4]"><SignalIcon className="h-5 w-5" />Signals</a>
            <a href="#vps" className="flex items-center gap-[6px]"><CloudIcon className="h-5 w-5" />VPS</a>
          </div>
        </div>
      </div>
    </section>
  );
}

export default function App() {
  return (
    <main className={`flex min-h-screen flex-col bg-[#f0f0f0] text-black ${UI}`}>
      <Toolbar />
      <div className="flex h-[204px]">
        <Navigator />
        <div className="-mt-px ml-1 flex min-w-0 flex-1 flex-col">
          <PriceChart />
          <div className="flex text-sm">
            <button className="ml-1 h-6 border-x border-b border-black bg-white px-[15px] leading-6 shadow-[1px_1px_0_#a0a0a0]">XAUUSD,M15</button>
            <button className="ml-4 leading-6 text-[#7a7a7a]">XAUUSD,M15</button>
            <div className="mr-[15px] ml-auto flex items-center gap-5">
              <button aria-label="Previous chart"><svg viewBox="0 0 5 8" className="h-2 w-[5px]"><path d="M5 0v8L0 4z" fill="#b0b0b0" /></svg></button>
              <button aria-label="Next chart"><svg viewBox="0 0 5 8" className="h-2 w-[5px]"><path d="M0 0v8l5-4z" fill="#b0b0b0" /></svg></button>
            </div>
          </div>
        </div>
      </div>
      <StrategyTester />
      <Toolbox />
    </main>
  );
}
